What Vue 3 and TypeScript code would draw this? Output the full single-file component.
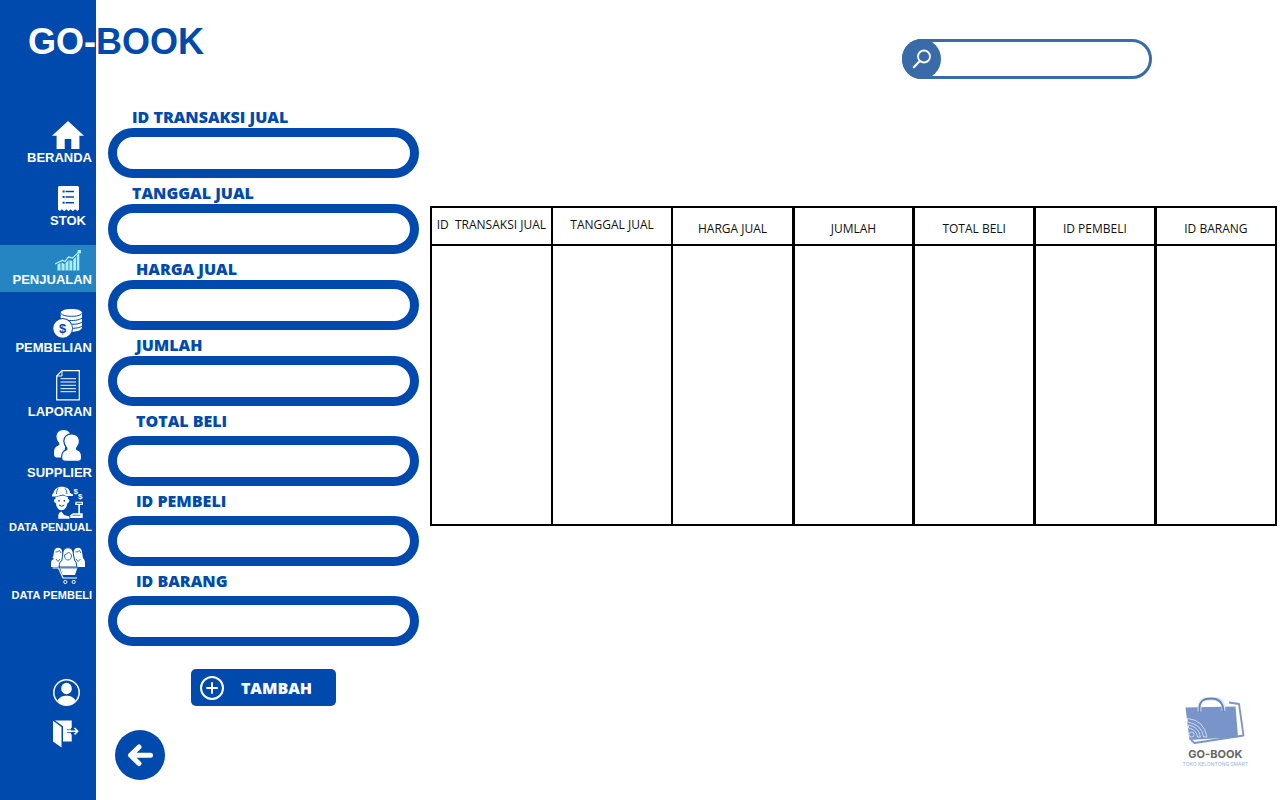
<script setup lang="ts">
import { ref } from 'vue'

interface NavItem {
  id: string
  label: string
  w: number
  h: number
  gap: 'none' | 'xs' | 'sm' | 'md' | 'lg'
  small?: boolean
  centered?: boolean
}

interface Field {
  id: string
  label: string
  inset?: boolean
  spaced?: boolean
}

const navItems: NavItem[] = [
  { id: 'beranda', label: 'BERANDA', w: 32, h: 28, gap: 'none' },
  { id: 'stok', label: 'STOK', w: 21, h: 26, gap: 'lg', centered: true },
  { id: 'penjualan', label: 'PENJUALAN', w: 27, h: 22, gap: 'lg' },
  { id: 'pembelian', label: 'PEMBELIAN', w: 30, h: 31, gap: 'lg' },
  { id: 'laporan', label: 'LAPORAN', w: 24, h: 33, gap: 'sm' },
  { id: 'supplier', label: 'SUPPLIER', w: 28, h: 34, gap: 'xs' },
  { id: 'penjual', label: 'DATA PENJUAL', w: 32, h: 33, gap: 'none', small: true },
  { id: 'pembeli', label: 'DATA PEMBELI', w: 34, h: 40, gap: 'md', small: true },
]

const active = ref('penjualan')

const fields: Field[] = [
  { id: 'id-transaksi', label: 'ID TRANSAKSI JUAL' },
  { id: 'tanggal', label: 'TANGGAL JUAL' },
  { id: 'harga', label: 'HARGA JUAL', inset: true },
  { id: 'jumlah', label: 'JUMLAH', inset: true },
  { id: 'total', label: 'TOTAL BELI', inset: true, spaced: true },
  { id: 'id-pembeli', label: 'ID PEMBELI', inset: true, spaced: true },
  { id: 'id-barang', label: 'ID BARANG', inset: true, spaced: true },
]

const values = ref<Record<string, string>>({})
const query = ref('')

const columns: string[] = [
  'ID  TRANSAKSI JUAL',
  'TANGGAL JUAL',
  'HARGA JUAL',
  'JUMLAH',
  'TOTAL BELI',
  'ID PEMBELI',
  'ID BARANG',
]
</script>

<template>
  <div class="page">
    <aside class="sidebar">
      <div class="brand brand-left">GO-</div>
      <nav class="nav">
        <a
          v-for="item in navItems"
          :key="item.id"
          href="#"
          class="nav-item"
          :class="['gap-' + item.gap, { active: active === item.id, small: item.small, centered: item.centered }]"
          @click.prevent="active = item.id"
        >
          <span class="nav-icon">
            <svg :width="item.w" :height="item.h" :viewBox="`0 0 ${item.w} ${item.h}`" aria-hidden="true">
              <path v-if="item.id === 'beranda'" fill="#fff" d="M16 0 32 14.7H27.4V28H19.3V18H12.7V28H4.6V14.7H0Z" />

              <g v-else-if="item.id === 'stok'">
                <path fill="#fff" d="M1.500 0H19.500Q21 0 21 1.500V23.500L19.200 25 17 23.300 14.800 25.300 12.600 23.300 10.500 25.300 8.400 23.300 6.200 25.300 4 23.300 1.800 25 0 23.500V1.500Q0 0 1.500 0Z" />
                <path stroke="#004aad" stroke-width="1.500" fill="none" d="M7.500 5.500H16M7.500 11H16M7.500 16.700H16" />
                <path stroke="#004aad" stroke-width="2" fill="none" d="M4.600 5.500H6.600M4.600 11H6.600M4.600 16.700H6.600" />
              </g>

              <g v-else-if="item.id === 'penjualan'">
                <path fill="#a9eef2" d="M2.500 15.500 5.500 14V21.500H2.500ZM6.500 13.500 9.600 15V21.500H6.500ZM10.500 14 13.500 11V21.500H10.500ZM14.400 11 17.300 12V21.500H14.400ZM18.200 10.500 21 8V21.500H18.200ZM21.800 6.500 24.300 4V21.500H21.800Z" />
                <path fill="none" stroke="#a9eef2" stroke-width="1.300" d="M0 15 7.500 11.300 10 12.500 13.500 8 17.500 9 24.500 2.500" />
                <path fill="#a9eef2" d="M22.700 1H26V4.300H22.700Z" />
              </g>

              <g v-else-if="item.id === 'pembelian'">
                <path fill="#fff" d="M7.700 4.800C7.700 2.600 12.400 1 18.400 1S29 2.600 29 4.800V19.500C29 21.700 25 23.600 19 23.800L7.700 12Z" />
                <path fill="none" stroke="#004aad" stroke-width="1" d="M7.700 5.300C9.500 7.600 13.500 8.300 18.400 8.300S27.500 7.600 29 5.500M14 12.300C19.500 13 26.500 12.300 29 10M18 16.300C23 16.300 27 15.800 29 14M20 20.300C24 20.200 27.500 19.500 29 18" />
                <circle cx="9.700" cy="20.300" r="10.300" fill="#004aad" />
                <circle cx="9.700" cy="20.300" r="9.400" fill="#fff" />
                <text x="9.700" y="25" text-anchor="middle" class="coin-mark">$</text>
              </g>

              <g v-else-if="item.id === 'laporan'" fill="none" stroke="#fff">
                <path stroke-width="1.200" d="M6 .700H23.300V29.800H.700V6Z" />
                <path stroke-width="1" d="M6 .700V6H.700" />
                <path stroke-width="1" d="M4.500 8.700H20M4.500 12H20M4.500 15.300H20M4.500 18.700H20M4.500 21.700H20" />
              </g>

              <g v-else-if="item.id === 'supplier'">
                <path fill="#fff" d="M9.500 0C14 0 16.500 2.800 16.500 6.500 16.500 10 14 12.500 12 14.500L8.500 27.500H3.500C.500 27.500 0 26 0 23 0 18.500 1.500 16.500 4.500 15.500 5.500 15 5.500 14 5 12.700 3.500 11 2.500 9 2.500 6.500 2.500 2.800 5.500 0 9.500 0Z" />
                <path fill="#fff" stroke="#004aad" stroke-width="1.200" d="M17.700 3.800C22.500 3.800 25.500 7 25.500 11 25.500 14 24.500 16 22.700 17.800 22.300 19 22.700 19.700 23.700 20 26.500 21 27.600 23.500 27.600 27 27.600 30.500 26.500 31.400 23.500 31.400H12C8.700 31.400 7.600 30.500 7.600 27.200 7.600 23.500 9 21 12 20 13 19.500 13.200 18.800 12.700 17.800 11 16 9.800 14 9.800 11 9.800 7 13 3.800 17.700 3.800Z" />
              </g>

              <g v-else-if="item.id === 'penjual'">
                <path fill="#fff" d="M1.500 7C2 3.500 5.500 .800 9.500 .800 14.500 .800 18 3 18 7L21 8.500V10H14L11 8.500 4 10.500H0V9Z" />
                <path fill="none" stroke="#004aad" stroke-width=".800" d="M6 2.200Q4.500 4.500 4.500 8M13 2.300Q15 4.500 15 8" />
                <path fill="#fff" d="M3.500 11 11 9.500 16 11V13Q18 13.500 17 16 16.500 17 15.500 17 14 24.300 9.500 24.300 5 24.300 3.800 17 1.500 16.500 2 13.500 2.500 13 3.500 13.300Z" />
                <path stroke="#004aad" stroke-width="1.500" stroke-linecap="round" d="M7 14.500V15M12.300 14.500V15" />
                <path fill="none" stroke="#004aad" d="M7 19Q9.600 21.500 12.300 19" />
                <path fill="#fff" d="M6.300 32.700V29Q6.800 26 9.500 25.500L12 29 17.500 30.500V32.700Z" />
                <path fill="#fff" d="M23.300 15.700H31V19H23.300ZM26.300 19H28V27.300H30.700V32H18.300V29L21 27.300H26.300Z" />
                <path stroke="#004aad" stroke-width="1" d="M24.700 17.300H29.700" />
                <path stroke="#004aad" stroke-width=".700" d="M20.500 29.300H28.500" />
                <text x="21.500" y="8" class="dollar">$</text>
                <text x="26" y="12.500" class="dollar">$</text>
              </g>

              <g v-else>
                <g fill="#fff">
                  <path d="M1.500 11Q2.500 9 3 5C3.300 1.800 5 .700 7.200 .700S11 1.800 11.200 5L12 11Q13 13 12.500 20H0V15.500Q0 12.500 3.500 12Z" />
                  <path d="M22 11 22.700 5C23 1.800 24.700 .700 27 .700S30.700 1.800 31 5L32 11Q34 12.500 34 15.500V20H21.500Z" />
                </g>
                <path fill="#fff" stroke="#004aad" stroke-width="1" d="M11 12Q11.500 10 11.800 6.500C12 2.500 14 .800 17 .800S22 2.500 22.300 6.500L23.500 13Q25.500 14.500 26 20H8Q8.300 14.500 11 13.500Z" />
                <g fill="none" stroke="#004aad" stroke-width=".800">
                  <path d="M4.500 5Q7 5 8.500 3.500L10 6M24.500 5Q27 5 28.500 3.500L29.800 6M13.500 8Q16 7.500 17.500 5L20.500 8Q20.500 13 17 13T13.500 8Z" />
                  <path d="M5 12 7 14.500 9 12M25 12 27 14.500 29.500 12" />
                </g>
                <path fill="#fff" d="M9 20.500H26.500L24 28H11.500Z" />
                <path fill="none" stroke="#004aad" stroke-width=".700" d="M10 21H26" />
                <path fill="none" stroke="#fff" stroke-width="1.200" d="M1.500 21H7.500L12 31H26" />
                <circle cx="14.300" cy="35" r="1.600" fill="none" stroke="#fff" />
                <circle cx="22.700" cy="35" r="1.600" fill="none" stroke="#fff" />
              </g>
            </svg>
          </span>
          <span class="nav-label">{{ item.label }}</span>
        </a>
      </nav>

      <div class="account">
        <button type="button" class="plain" aria-label="Akun">
          <svg width="27" height="27" viewBox="0 0 27 27" aria-hidden="true">
            <circle cx="13.500" cy="13.500" r="12.700" fill="none" stroke="#fff" stroke-width="1.500" />
            <ellipse cx="13.500" cy="9.500" rx="5.300" ry="5.800" fill="#fff" />
            <path fill="#fff" d="M4.500 21.500C6.500 18 10 16.800 13.500 16.800S20.500 18 22.500 21.500Q19 26 13.500 26T4.500 21.500Z" />
          </svg>
        </button>
        <button type="button" class="plain" aria-label="Keluar">
          <svg width="27" height="28" viewBox="0 0 27 28" aria-hidden="true">
            <path fill="#fff" d="M0 .800 8.500 7V27.500L0 21.500Z" />
            <path fill="#fff" d="M2 .500H18.700V21.500H10V6.200Z" />
            <path stroke="#004aad" stroke-width="1.200" d="M18.700 8V14.500" />
            <path fill="none" stroke="#004aad" stroke-width=".800" d="M14 9.800H19M14 12.600H19" />
            <path fill="none" stroke="#fff" stroke-width="1.500" d="M14 11.200H24.500M21.500 8 24.700 11.200 21.500 14.400" />
          </svg>
        </button>
      </div>
    </aside>

    <main class="main">
      <header class="header">
        <div class="brand brand-right">BOOK</div>
        <form class="search" role="search" @submit.prevent>
          <button type="submit" class="search-btn" aria-label="Cari">
            <svg width="20" height="20" viewBox="0 0 20 20" aria-hidden="true">
              <circle cx="12" cy="7.500" r="6" fill="none" stroke="#fff" stroke-width="1.800" />
              <path stroke="#fff" stroke-width="2.200" stroke-linecap="round" d="M7.500 12.200 1.800 18.200" />
            </svg>
          </button>
          <input v-model="query" class="search-input" type="text" aria-label="Pencarian" />
        </form>
      </header>

      <div class="content">
        <section class="left">
          <form class="form" @submit.prevent>
            <div v-for="f in fields" :key="f.id" class="field" :class="{ inset: f.inset, spaced: f.spaced }">
              <label :for="f.id">{{ f.label }}</label>
              <input :id="f.id" v-model="values[f.id]" type="text" />
            </div>
            <button type="submit" class="add">
              <svg width="26" height="26" viewBox="0 0 26 26" aria-hidden="true">
                <circle cx="13" cy="13" r="11" fill="none" stroke="#fff" stroke-width="2" />
                <path stroke="#fff" stroke-width="2" stroke-linecap="round" d="M13 8V18M8 13H18" />
              </svg>
              <span>TAMBAH</span>
            </button>
          </form>
          <button type="button" class="back" aria-label="Kembali">
            <svg width="50" height="50" viewBox="0 0 50 50" aria-hidden="true">
              <path fill="none" stroke="#fff" stroke-width="5" stroke-linecap="round" stroke-linejoin="round" d="M24 17 15.500 25.300 24 33.500M16 25.300H35.500" />
            </svg>
          </button>
        </section>

        <section class="right">
          <table class="grid">
            <thead>
              <tr>
                <th v-for="c in columns" :key="c" scope="col">{{ c }}</th>
              </tr>
            </thead>
            <tbody>
              <tr>
                <td v-for="c in columns" :key="c"></td>
              </tr>
            </tbody>
          </table>

          <div class="mark">
            <svg width="60" height="50" viewBox="0 0 60 50" aria-hidden="true">
              <path fill="none" stroke="#7894c9" stroke-width="1.800" stroke-linejoin="round" d="M44 5.500 54 7 58.500 38.500 9.500 46 6 43" />
              <path fill="#7894c9" d="M.500 10.500 50.500 9.500 53 40 4.500 43Z" />
              <path fill="none" stroke="#dfe7f5" stroke-width="3.600" d="M14.500 14.500V10C14.500 4 17.500 2 21.500 2H31C36.500 2 38.500 5 38.500 14" />
              <path fill="none" stroke="#6382bd" stroke-width="1.800" stroke-linecap="round" d="M14.500 14.500V11C14.500 4 19 1.500 26 1.500S38 5 38.500 14" />
              <g fill="none" stroke="#d7e1f3" stroke-width=".900">
                <circle cx="6.500" cy="37.500" r="2.500" />
                <path d="M3.500 31V28Q13.500 29.500 15.500 40H12.500Q11.500 32.500 3.500 31ZM2.500 25V21.500Q19 23 22 40H18.700Q16.500 27 2.500 25Z" />
              </g>
            </svg>
            <strong>GO-BOOK</strong>
            <small>TOKO KELONTONG SMART</small>
          </div>
        </section>
      </div>
    </main>
  </div>
</template>

<style>
body {
  margin: 0;
  background: #fff;
}
</style>

<style scoped>
* {
  box-sizing: border-box;
}

.page {
  display: flex;
  min-height: 100vh;
  font-family: 'Open Sans', 'Noto Sans', sans-serif;
  color: #004aad;
}

.sidebar {
  flex: 0 0 96px;
  display: flex;
  flex-direction: column;
  padding: 21px 0 52px;
  background: #004aad;
  color: #fff;
  font-family: 'Liberation Sans', Arial, sans-serif;
}

.brand {
  font: bold 36px/42px 'Liberation Sans', Arial, sans-serif;
  white-space: nowrap;
}

.brand-left {
  text-align: right;
}

.nav {
  display: flex;
  flex-direction: column;
  margin-top: 54px;
}

.nav-item {
  display: flex;
  flex-direction: column;
  align-items: flex-end;
  padding: 4px 4px 3px;
  color: inherit;
  text-decoration: none;
}

.nav-item.active {
  background: #2585c3;
}

.gap-xs {
  margin-top: 2px;
}

.gap-sm {
  margin-top: 6px;
}

.gap-md {
  margin-top: 8px;
}

.gap-lg {
  margin-top: 12px;
}

.nav-icon {
  display: flex;
  justify-content: center;
  width: 36px;
  margin-right: 6px;
}

.nav-icon svg,
.plain svg {
  display: block;
}

.nav-label {
  font-size: 13px;
  line-height: 18px;
  font-weight: bold;
  white-space: nowrap;
}

.centered .nav-label {
  padding-right: 6px;
}

.nav-item.small {
  padding-top: 1px;
}

.small .nav-label {
  font-size: 11px;
  line-height: 16px;
}

.coin-mark {
  font: bold 13px 'Liberation Sans', Arial, sans-serif;
  fill: #004aad;
}

.dollar {
  font: bold 8px 'Liberation Sans', Arial, sans-serif;
  fill: #fff;
}

.account {
  display: flex;
  flex-direction: column;
  align-items: flex-end;
  gap: 14px;
  margin-top: auto;
  padding-right: 16px;
}

.plain {
  padding: 0;
  border: 0;
  background: none;
}

.main {
  flex: 1;
  min-width: 0;
  display: flex;
  flex-direction: column;
}

.header {
  display: flex;
  align-items: flex-start;
  justify-content: space-between;
  height: 106px;
  padding: 21px 128px 0 0;
}

.search {
  display: flex;
  width: 250px;
  height: 40px;
  margin-top: 18px;
  border: 3px solid #386ba8;
  border-radius: 20px;
}

.search-btn {
  flex: none;
  display: flex;
  align-items: center;
  justify-content: center;
  width: 39px;
  height: 40px;
  margin: -3px 0 0 -3px;
  padding: 0;
  border: 0;
  border-radius: 50%;
  background: #386ba8;
}

.search-input {
  flex: 1;
  min-width: 0;
  margin: 0 12px 0 4px;
  padding: 0;
  border: 0;
  outline: 0;
  background: transparent;
  font: 14px 'Open Sans', sans-serif;
}

.content {
  flex: 1;
  display: grid;
  grid-template-columns: 334px 1fr;
}

.left {
  display: flex;
  flex-direction: column;
  padding: 0 11px 20px 12px;
}

.form {
  display: flex;
  flex-direction: column;
  gap: 4px;
}

.field {
  display: flex;
  flex-direction: column;
}

.field label {
  padding: 0 0 0 24px;
  font-size: 16px;
  line-height: 22px;
  font-weight: 800;
}

.field.inset label {
  padding-left: 28px;
}

.field.spaced label {
  padding-bottom: 4px;
}

.field input {
  width: 100%;
  height: 50px;
  padding: 0 16px;
  border: 9px solid #004aad;
  border-radius: 25px;
  background: #fff;
  font: 16px 'Open Sans', sans-serif;
  outline: 0;
}

.add {
  display: flex;
  align-items: center;
  align-self: center;
  gap: 16px;
  height: 37px;
  margin-top: 19px;
  padding: 0 24px 0 8px;
  border: 0;
  border-radius: 5px;
  background: #004aad;
  color: #fff;
  font: 800 16px 'Open Sans', sans-serif;
}

.back {
  width: 50px;
  height: 50px;
  margin: auto 0 0 7px;
  padding: 0;
  border: 0;
  border-radius: 50%;
  background: #004aad;
}

.back svg {
  display: block;
}

.right {
  display: flex;
  flex-direction: column;
  padding: 100px 3px 33px 0;
}

.grid {
  width: 100%;
  table-layout: fixed;
  border-collapse: collapse;
  border: 2px solid #000;
  color: #111;
}

.grid th,
.grid td {
  padding: 0;
  border: 2px solid #000;
}

.grid th:nth-child(n + 4),
.grid td:nth-child(n + 4) {
  border-left-width: 3px;
}

.grid th {
  height: 38px;
  padding-top: 6px;
  font-size: 12px;
  line-height: 16px;
  font-weight: 400;
  white-space: pre;
}

.grid th:nth-child(-n + 2) {
  padding: 0 0 2px;
}

.grid td {
  height: 280px;
}

.mark {
  display: flex;
  flex-direction: column;
  align-items: center;
  align-self: flex-end;
  margin: auto 29px 0 0;
  font-family: Inter, sans-serif;
}

.mark strong {
  color: #666;
  font-size: 11px;
  line-height: 14px;
  font-weight: 700;
}

.mark small {
  color: #9db2da;
  font-size: 5px;
  line-height: 6px;
}
</style>
